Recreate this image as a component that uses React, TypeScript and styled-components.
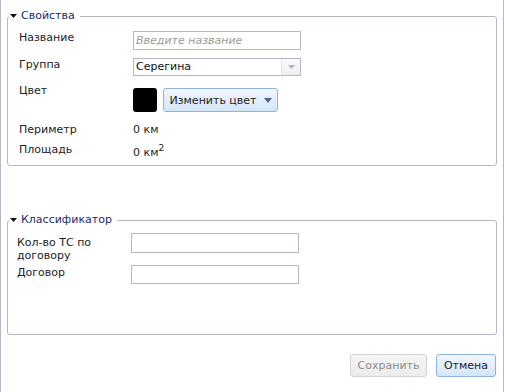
import styled, { createGlobalStyle } from 'styled-components'

const GlobalStyle = createGlobalStyle`
  html, body {
    margin: 0;
    background: #fff;
  }
  body {
    font-family: "DejaVu Sans", Verdana, sans-serif;
    font-size: 11px;
    color: #222;
  }
`

const Window = styled.div`
  box-sizing: border-box;
  width: 504px;
  height: 392px;
  border-left: 1px solid #b5b8c8;
  border-right: 1px solid #b5b8c8;
  padding: 9px 6px 0;
  display: flex;
  flex-direction: column;
`

const Group = styled.fieldset<{ $height: number; $gap?: number }>`
  box-sizing: border-box;
  margin: ${p => p.$gap ?? 0}px 0 0;
  padding: 0;
  min-width: 0;
  height: ${p => p.$height}px;
  border: 1px solid #b5b8c8;
  border-radius: 3px;
`

const Legend = styled.legend`
  margin-left: 1px;
  padding: 0 5px 0 1px;
  line-height: 14px;
  font-size: 11px;
  color: #1b2a6b;
  display: flex;
  align-items: center;
  gap: 4px;
`

const Body = styled.div<{ $left: number }>`
  padding-left: ${p => p.$left}px;
  display: flex;
  flex-direction: column;
`

const Row = styled.div<{ $top: number; $height?: number }>`
  display: flex;
  align-items: flex-start;
  margin-top: ${p => p.$top}px;
  height: ${p => (p.$height ? `${p.$height}px` : 'auto')};
`

const Label = styled.div<{ $pad?: number }>`
  flex: 0 0 114px;
  box-sizing: border-box;
  padding-right: 10px;
  padding-top: ${p => p.$pad ?? 0}px;
  line-height: 13px;
  color: #222;
`

const Value = styled.div<{ $pad?: number }>`
  padding-top: ${p => p.$pad ?? 0}px;
  line-height: 13px;
  color: #222;

  sup {
    font-size: 9px;
    line-height: 0;
    vertical-align: 5px;
  }
`

const TextInput = styled.input<{ $w: number; $h: number }>`
  box-sizing: border-box;
  width: ${p => p.$w}px;
  height: ${p => p.$h}px;
  margin: 0;
  padding: 0 2px;
  border: 1px solid #b5b8c8;
  border-radius: 0;
  background: #fff;
  font-family: inherit;
  font-size: 11px;
  color: #222;
  outline: none;

  &::placeholder {
    color: #9a9a9a;
    font-style: italic;
  }
`

const Combo = styled.div`
  box-sizing: border-box;
  width: 168px;
  height: 18px;
  display: flex;
  border: 1px solid #b5b8c8;
  background: #fff;
`

const ComboText = styled.div`
  flex: 1;
  padding-left: 2px;
  line-height: 16px;
  color: #111;
`

const ComboTrigger = styled.div`
  width: 18px;
  border-left: 1px solid #e2e4ea;
  background: linear-gradient(#fbfbfc, #eceef2);
  display: flex;
  align-items: center;
  justify-content: center;
`

const ColorControls = styled.div`
  display: flex;
  align-items: center;
  gap: 6px;
  margin-top: 4px;
`

const Swatch = styled.div<{ $color: string }>`
  width: 24px;
  height: 24px;
  border-radius: 3px;
  background: ${p => p.$color};
`

const Button = styled.button<{ $w: number; $h: number; $disabled?: boolean }>`
  box-sizing: border-box;
  width: ${p => p.$w}px;
  height: ${p => p.$h}px;
  margin: 0;
  padding: 0 4px;
  display: flex;
  align-items: center;
  justify-content: center;
  gap: 7px;
  white-space: nowrap;
  border-radius: 3px;
  font-family: inherit;
  font-size: 11px;
  cursor: ${p => (p.$disabled ? 'default' : 'pointer')};
  border: 1px solid ${p => (p.$disabled ? '#d3d3d3' : '#8eb3dd')};
  color: ${p => (p.$disabled ? '#8c8c8c' : '#222')};
  background: ${p =>
    p.$disabled
      ? 'linear-gradient(#f6f6f6, #ececec)'
      : 'linear-gradient(#f1f7fe, #d3e6fa)'};
`

const Footer = styled.div`
  margin-top: 19px;
  margin-right: 1px;
  display: flex;
  justify-content: flex-end;
  gap: 9px;
`

const Arrow = ({ w, h, color }: { w: number; h: number; color: string }) => (
  <svg width={w} height={h} viewBox={`0 0 ${w} ${h}`}>
    <polygon points={`0,0 ${w},0 ${w / 2},${h}`} fill={color} />
  </svg>
)

export default function App() {
  return (
    <>
      <GlobalStyle />
      <Window>
        <Group $height={157}>
          <Legend>
            <Arrow w={7} h={4} color="#111" />
            Свойства
          </Legend>
          <Body $left={11}>
            <Row $top={8}>
              <Label $pad={0}>Название</Label>
              <TextInput $w={168} $h={19} placeholder="Введите название" />
            </Row>
            <Row $top={8}>
              <Label $pad={0}>Группа</Label>
              <Combo>
                <ComboText>Серегина</ComboText>
                <ComboTrigger>
                  <Arrow w={7} h={4} color="#a9b6c8" />
                </ComboTrigger>
              </Combo>
            </Row>
            <Row $top={8}>
              <Label>Цвет</Label>
              <ColorControls>
                <Swatch $color="#000" />
                <Button $w={115} $h={24}>
                  Изменить цвет
                  <Arrow w={8} h={5} color="#4c6889" />
                </Button>
              </ColorControls>
            </Row>
            <Row $top={11}>
              <Label>Периметр</Label>
              <Value>0 км</Value>
            </Row>
            <Row $top={7}>
              <Label>Площадь</Label>
              <Value $pad={3}>
                0 км<sup>2</sup>
              </Value>
            </Row>
          </Body>
        </Group>

        <Group $height={122} $gap={47}>
          <Legend>
            <Arrow w={7} h={4} color="#111" />
            Классификатор
          </Legend>
          <Body $left={9}>
            <Row $top={6} $height={20}>
              <Label $pad={3}>Кол-во ТС по договору</Label>
              <TextInput $w={168} $h={20} />
            </Row>
            <Row $top={12}>
              <Label $pad={1}>Договор</Label>
              <TextInput $w={168} $h={19} />
            </Row>
          </Body>
        </Group>

        <Footer>
          <Button $w={77} $h={23} $disabled disabled>
            Сохранить
          </Button>
          <Button $w={60} $h={23}>
            Отмена
          </Button>
        </Footer>
      </Window>
    </>
  )
}
